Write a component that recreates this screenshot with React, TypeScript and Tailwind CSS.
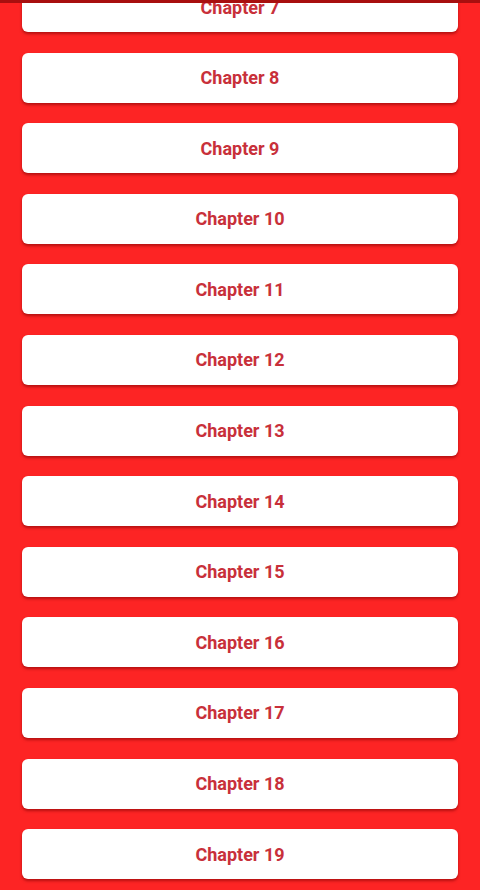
import React from "react";

const chapters = Array.from({ length: 13 }, (_, i) => i + 7);

export default function App() {
  return (
    <div className="relative h-[890px] w-[480px] overflow-hidden bg-[#fd2424]" style={{ fontFamily: "Roboto, 'Liberation Sans', sans-serif" }}>
      <div className="absolute left-0 right-0 top-0 z-10 h-[3px] bg-[#a80f0f]" />
      <div className="mt-[-18px] flex flex-col gap-[20.6px] px-[22px]">
        {chapters.map((c) => (
          <div
            key={c}
            className="flex h-[50px] items-center justify-center rounded-[6px] bg-white text-[18px] font-bold text-[#c8303a] shadow-[0_2px_3px_rgba(120,0,0,0.55)]"
          >
            Chapter {c}
          </div>
        ))}
      </div>
    </div>
  );
}
